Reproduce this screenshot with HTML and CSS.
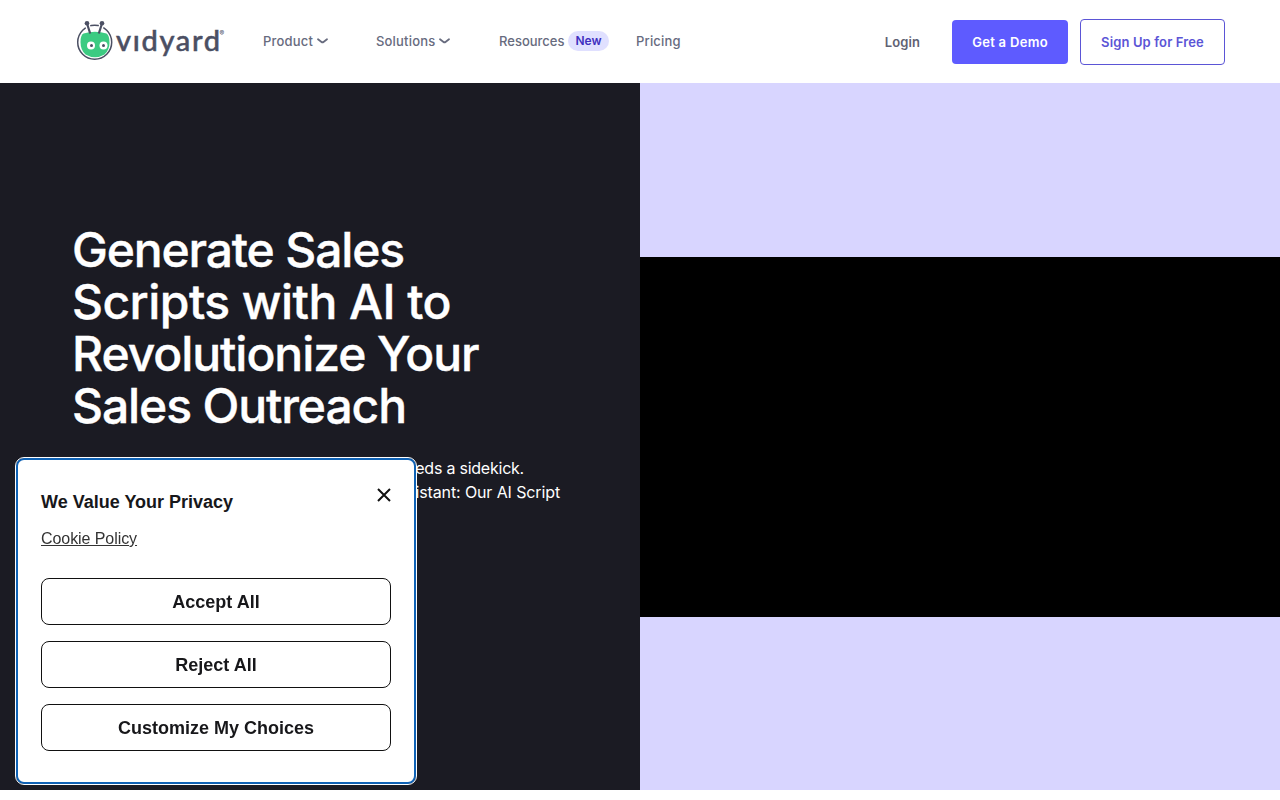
FILE: index.html
```html
<!DOCTYPE html>
<html lang="en">
<head>
    <meta charset="UTF-8">
    <meta name="viewport" content="width=device-width, initial-scale=1.0">
    <title>AI Script Generator | Vidyard</title>
    <link rel="stylesheet" href="styles.css">
</head>
<body>
    <header class="header">
        <a class="logo" href="#" aria-label="vidyard">
            <svg width="150" height="44" viewBox="0 0 150 44">
                <circle cx="18.700" cy="23.200" r="17" fill="#fff" stroke="#4b4f63" stroke-width="1.500"/>
                <path d="M11 5l3.500 10M26 5l-3.500 10" fill="none" stroke="#fff" stroke-width="5"/>
                <path d="M7.500 14.500Q19 11 30.500 14.500Q33.500 16 33.500 24Q33.500 31 28.500 35.500Q19 41 9.500 35.500Q4.500 31 4.500 23Q4.500 16 7.500 14.500z" fill="#3ccb82"/>
                <path d="M11 4.500l3.200 10M26 4.500l-3.200 10" fill="none" stroke="#4b4f63" stroke-width="2.200"/>
                <circle cx="11" cy="4.300" r="2.300" fill="#4b4f63"/>
                <circle cx="26" cy="4.300" r="2.300" fill="#4b4f63"/>
                <circle cx="15" cy="26.500" r="4" fill="#fff"/>
                <circle cx="27.500" cy="26.500" r="4" fill="#fff"/>
                <circle cx="15.500" cy="26.500" r="1.500" fill="#4b4f63"/>
                <circle cx="27.500" cy="26.500" r="1.500" fill="#4b4f63"/>
                <text class="logo-text" x="40" y="31.500" textLength="104">vıdyard</text>
                <text class="logo-mark" x="143.500" y="17">®</text>
            </svg>
        </a>
        <nav class="nav">
            <a class="product" href="#">Product<svg class="arrow" width="11" height="6" viewBox="0 0 11 6"><path d="M1 1.200L4.500 3.900Q5.500 4.600 6.500 3.900L10 1.200"/></svg></a>
            <a class="solutions" href="#">Solutions<svg class="arrow" width="11" height="6" viewBox="0 0 11 6"><path d="M1 1.200L4.500 3.900Q5.500 4.600 6.500 3.900L10 1.200"/></svg></a>
            <a class="resources" href="#">Resources</a><span class="new">New</span>
            <a class="pricing" href="#">Pricing</a>
        </nav>
        <div class="actions">
            <a class="login" href="#">Login</a>
            <a class="btn demo" href="#">Get a Demo</a>
            <a class="btn signup" href="#">Sign Up for Free</a>
        </div>
    </header>

    <main class="hero">
        <section class="intro">
            <h1>
                <span class="l1">Generate Sales</span>
                <span class="l2">Scripts with AI to</span>
                <span class="l3">Revolutionize Your</span>
                <span class="l4">Sales Outreach</span>
            </h1>
            <p>
                <span class="p1">Every great sales superhero needs a sidekick.</span>
                <span class="p2">Meet your new sales assistant: Our AI Script</span>
            </p>
        </section>
        <section class="media">
            <div class="video"></div>
        </section>
    </main>

    <div class="cookie">
        <div class="cookie-head">
            <h2>We Value Your Privacy</h2>
            <button class="close" aria-label="Close">
                <svg width="14" height="14" viewBox="0 0 14 14"><path d="M1 1l12 12M13 1L1 13"/></svg>
            </button>
        </div>
        <a class="policy" href="#">Cookie Policy</a>
        <div class="choices">
            <button>Accept All</button>
            <button>Reject All</button>
            <button>Customize My Choices</button>
        </div>
    </div>
</body>
</html>
```

FILE: styles.css
```css
*{
    box-sizing:border-box;
}
body{
    margin:0;
    height:800px;
    overflow:hidden;
    background:#fff;
    font-family:Inter, "Liberation Sans", sans-serif;
}
a{
    color:inherit;
    text-decoration:none;
}

/* header */
.header{
    display:flex;
    align-items:center;
    height:83px;
    padding:0 55px 0 76px;
    font-size:13px;
    font-weight:500;
    color:#676b7e;
}
.logo{
    width:150px;
    height:44px;
    margin-bottom:1px;
}
.logo svg{
    display:block;
}
.logo-text{
    font-family:Lato, sans-serif;
    font-size:29px;
    font-weight:500;
    fill:#4b4f63;
    stroke:#4b4f63;
    stroke-width:.5px;
}
.logo-mark{
    font-size:7px;
    fill:#4b4f63;
}
.nav{
    display:flex;
    align-items:center;
    height:20px;
    margin-left:37px;
    margin-bottom:1px;
    line-height:20px;
    letter-spacing:.18px;
}
.nav a{
    white-space:nowrap;
}
.product{
    width:113px;
}
.solutions{
    width:123px;
}
.resources{
    width:69px;
    letter-spacing:0;
}
.pricing{
    margin-left:27px;
}
.arrow{
    margin-left:4px;
    vertical-align:2px;
    fill:none;
    stroke:#676b7e;
    stroke-width:1.8;
    stroke-linecap:round;
}
.new{
    width:41px;
    height:20px;
    border-radius:10px;
    background:#e0e0ff;
    color:#3f2fc0;
    font-size:12px;
    font-weight:600;
    letter-spacing:0;
    text-align:center;
}
.actions{
    display:flex;
    align-items:center;
    margin-left:auto;
    padding-top:1px;
}
.login{
    margin-right:32px;
    font-weight:600;
    letter-spacing:.1px;
    color:#5f6273;
}
.btn{
    display:flex;
    align-items:center;
    justify-content:center;
    border-radius:4px;
    font-weight:600;
    white-space:nowrap;
}
.demo{
    width:116px;
    height:44px;
    background:#5e5bff;
    color:#fff;
    letter-spacing:.3px;
}
.signup{
    width:145px;
    height:46px;
    margin-left:12px;
    border:1px solid #5b55d6;
    color:#5b55d6;
    letter-spacing:.12px;
}

/* hero */
.hero{
    display:flex;
    height:707px;
}
.intro{
    width:640px;
    padding:141px 0 0 72px;
    background:#1b1b23;
    color:#fff;
}
.intro h1{
    margin:0;
    font-size:48px;
    font-weight:500;
    line-height:52px;
    white-space:nowrap;
    -webkit-text-stroke:.4px #fff;
}
.intro h1 span,
.intro p span{
    display:block;
}
.l1{
    letter-spacing:-1.15px;
}
.l2{
    letter-spacing:-.55px;
}
.l3{
    letter-spacing:-1.05px;
}
.l4{
    letter-spacing:-1.1px;
}
.intro p{
    margin:24px 0 0;
    font-size:16px;
    line-height:24px;
    white-space:nowrap;
}
/* the two lines are ragged on the right */
.p1{
    width:452px;
    text-align:right;
    letter-spacing:-.23px;
}
.p2{
    width:488px;
    text-align:right;
    letter-spacing:-.12px;
}
.media{
    display:flex;
    flex-direction:column;
    width:640px;
    padding-top:174px;
    background:#d8d5ff;
}
.video{
    height:360px;
    background:#000;
}

/* cookie dialog */
.cookie{
    position:fixed;
    left:16px;
    bottom:16px;
    width:400px;
    height:326px;
    padding:25px 23px;
    border:2px solid #0f62b5;
    border-radius:8px;
    outline:1px solid #fff;
    background:#fff;
    color:#17171a;
    font-family:"Liberation Sans", Arial, sans-serif;
}
.cookie-head{
    display:flex;
    justify-content:space-between;
}
.cookie h2{
    margin:6px 0 0;
    font-size:18px;
    line-height:22px;
}
.close{
    width:14px;
    height:14px;
    margin-top:3px;
    padding:0;
    border:0;
    background:none;
}
.close svg{
    display:block;
    stroke:#111;
    stroke-width:2;
}
.policy{
    display:inline-block;
    margin-top:15px;
    font-size:16px;
    line-height:22px;
    letter-spacing:-.07px;
    color:#333;
    text-decoration:underline;
}
.choices{
    display:flex;
    flex-direction:column;
    gap:16px;
    margin-top:28px;
}
.choices button{
    height:47px;
    padding:2px 0 0;
    border:1px solid #111;
    border-radius:8px;
    background:#fff;
    color:#17171a;
    font:bold 18px "Liberation Sans", Arial, sans-serif;
}
```
